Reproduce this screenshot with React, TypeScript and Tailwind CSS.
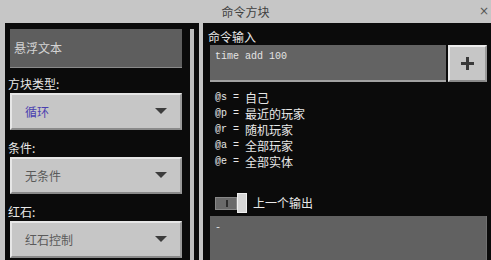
import React from "react";

const cjk = "font-['Noto_Sans_CJK_SC','Noto_Sans',sans-serif]";
const mono = "font-['Liberation_Mono','DejaVu_Sans_Mono',monospace]";

function Arrow() {
  return (
    <svg width="12" height="7" viewBox="0 0 12 7">
      <polygon points="0,0 12,0 6,6" fill="#3c3c3c" />
    </svg>
  );
}

function Dropdown({ text, color }: { text: string; color: string }) {
  return (
    <div className="ml-[5px] w-[172px] h-[37px] bg-[#c6c6c6] border-t-2 border-l-2 border-[#e6e6e6] border-b-2 border-b-[#8a8a8a] border-r-2 border-r-[#9a9a9a] flex items-center justify-between pl-[13px] pr-[13px]">
      <span className={`${cjk} text-[12px] leading-[16px]`} style={{ color }}>
        {text}
      </span>
      <Arrow />
    </div>
  );
}

function Label({ text, h }: { text: string; h: string }) {
  return (
    <div className={`${h} flex items-end pl-[3px] pb-[1px]`}>
      <span className={`${cjk} text-[12px] leading-[16px] text-[#e8e8e8]`}>{text}</span>
    </div>
  );
}

const rows: [string, string][] = [
  ["@s =", "自己"],
  ["@p =", "最近的玩家"],
  ["@r =", "随机玩家"],
  ["@a =", "全部玩家"],
  ["@e =", "全部实体"],
];

export default function App() {
  return (
    <div className="w-[491px] h-[260px] bg-[#c6c6c6] flex flex-col overflow-hidden">
      <div className="h-[23px] relative flex items-center justify-center shrink-0">
        <span className={`${cjk} text-[12px] leading-[16px] text-[#404040]`}>命令方块</span>
        <span className="absolute right-[2px] top-[3px] font-['DejaVu_Sans',sans-serif] text-[12px] leading-[16px] text-[#555]">×</span>
      </div>
      <div className="flex flex-1 min-h-0">
        {/* left panel */}
        <div className="ml-[5px] w-[194px] bg-[#0b0b0b] flex">
          <div className="w-[185px] flex flex-col pt-[6px]">
            <div className="ml-[5px] w-[172px] h-[39px] bg-[#5e5e5e] border-b border-[#8a8a8a] flex items-center pl-[4px]">
              <span className={`${cjk} text-[12px] leading-[16px] text-[#d4d4d4]`}>悬浮文本</span>
            </div>
            <Label text="方块类型:" h="h-[25px]" />
            <Dropdown text="循环" color="#4b3fb0" />
            <Label text="条件:" h="h-[27px]" />
            <Dropdown text="无条件" color="#5a5a5a" />
            <Label text="红石:" h="h-[27px]" />
            <Dropdown text="红石控制" color="#5a5a5a" />
          </div>
          <div className="w-[4px] mt-[6px] bg-[#bdbdbd]" />
        </div>
        <div className="w-[4px]" />
        {/* right panel */}
        <div className="flex-1 bg-[#0b0b0b] flex flex-col pl-[5px] pr-[4px]">
          <div className="h-[22px] flex items-end">
            <span className={`${cjk} text-[12px] leading-[16px] text-[#e8e8e8]`}>命令输入</span>
          </div>
          <div className="flex ml-[2px] gap-[2px]">
            <div className={`flex-1 h-[37px] bg-[#636363] border-b-2 border-[#a2a2a2] pl-[5px] pt-[5px] ${mono} text-[10px] leading-[14px] text-[#e4e4e4]`}>
              time add 100
            </div>
            <div className="w-[39px] h-[37px] bg-[#c6c6c6] border-t-2 border-l-2 border-[#ececec] border-b-2 border-b-[#8a8a8a] border-r-2 border-r-[#9a9a9a] flex items-center justify-center">
              <svg width="13" height="13" viewBox="0 0 13 13">
                <rect x="5" y="0" width="3" height="13" fill="#3a3a3a" />
                <rect x="0" y="5" width="13" height="3" fill="#3a3a3a" />
              </svg>
            </div>
          </div>
          <div className="flex flex-col pl-[7px] pt-[8px]">
            {rows.map(([a, b]) => (
              <div key={a} className="h-[16px] flex items-center text-[#e8e8e8]">
                <span className={`${mono} w-[30px] text-[10px] leading-[16px]`}>{a}</span>
                <span className={`${cjk} text-[12px] leading-[16px]`}>{b}</span>
              </div>
            ))}
          </div>
          <div className="flex items-center pl-[7px] mt-[23px] h-[20px]">
            <div className="w-[22px] h-[13px] bg-[#6a6a6a] border border-[#888] flex items-center justify-end pr-[8px]">
              <div className="w-[2px] h-[7px] bg-[#2c2c2c]" />
            </div>
            <div className="w-[10px] h-[20px] bg-[#d6d6d6] border border-[#f0f0f0]" />
            <span className={`${cjk} ml-[6px] text-[12px] leading-[16px] text-[#e8e8e8]`}>上一个输出</span>
          </div>
          <div className={`mt-[3px] ml-[2px] flex-1 bg-[#616161] border-r border-[#707070] pl-[5px] pt-[5px] ${mono} text-[10px] leading-[14px] text-[#e0e0e0]`}>
            -
          </div>
        </div>
      </div>
    </div>
  );
}
